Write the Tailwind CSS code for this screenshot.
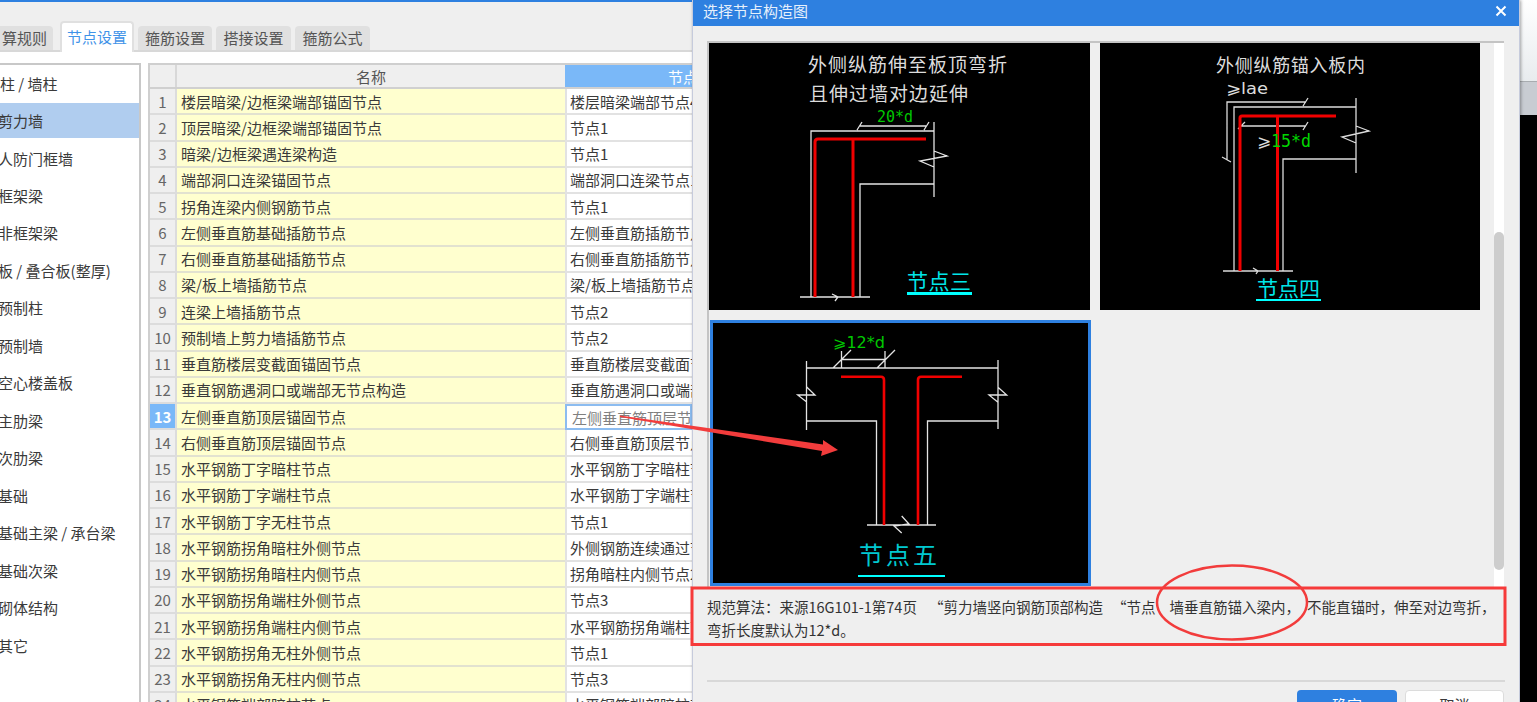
<!DOCTYPE html>
<html lang="zh">
<head>
<meta charset="utf-8">
<title>选择节点构造图</title>
<script src="https://cdn.jsdelivr.net/npm/@tailwindcss/browser@4"></script>
</head>
<body class="relative h-[702px] w-[1537px] overflow-hidden bg-white font-['Noto_Sans_CJK_SC','Noto_Sans',sans-serif] text-[15px] leading-none text-[#3a3a3a]">

<div class="h-[2px] bg-[#2e80e0]"></div>
<div class="flex h-[50px] items-end gap-[4px] border-b-2 border-[#d8d8d8] bg-[#efefef]">
  <div class="-ml-[4px] flex h-[24px] w-[57px] items-center justify-end rounded-t bg-[#e0e0e0] pr-[6px] pb-[2px] text-[#555]">算规则</div>
  <div class="-mb-[2px] ml-[3px] flex h-[31px] w-[74px] items-center justify-center rounded-t border-2 border-b-0 border-[#e0e0e0] bg-white pb-[2px] text-[#3f93e8]">节点设置</div>
  <div class="flex h-[24px] w-[74px] items-center justify-center rounded-t bg-[#e0e0e0] pb-[2px] text-[#555]">箍筋设置</div>
  <div class="flex h-[24px] w-[75px] items-center justify-center rounded-t bg-[#e0e0e0] pb-[2px] text-[#555]">搭接设置</div>
  <div class="flex h-[24px] w-[75px] items-center justify-center rounded-t bg-[#e0e0e0] pb-[2px] text-[#555]">箍筋公式</div>
</div>

<div class="mt-[11px] flex h-[639px] items-start">
  <!-- category list -->
  <div class="h-full w-[141px] overflow-hidden border-t-2 border-r-2 border-[#c8c8c8] pt-[0.6px]">
    <div class="mb-[2.47px] flex h-[35px] items-center">柱 / 墙柱</div>
    <div class="mb-[2.47px] flex h-[35px] items-center bg-[#b0cdef] -indent-[2px]">剪力墙</div>
    <div class="mb-[2.47px] flex h-[35px] items-center -indent-[2px]">人防门框墙</div>
    <div class="mb-[2.47px] flex h-[35px] items-center -indent-[2px]">框架梁</div>
    <div class="mb-[2.47px] flex h-[35px] items-center -indent-[2px]">非框架梁</div>
    <div class="mb-[2.47px] flex h-[35px] items-center -indent-[2px]">板 / 叠合板(整厚)</div>
    <div class="mb-[2.47px] flex h-[35px] items-center -indent-[2px]">预制柱</div>
    <div class="mb-[2.47px] flex h-[35px] items-center -indent-[2px]">预制墙</div>
    <div class="mb-[2.47px] flex h-[35px] items-center -indent-[2px]">空心楼盖板</div>
    <div class="mb-[2.47px] flex h-[35px] items-center -indent-[2px]">主肋梁</div>
    <div class="mb-[2.47px] flex h-[35px] items-center -indent-[2px]">次肋梁</div>
    <div class="mb-[2.47px] flex h-[35px] items-center -indent-[2px]">基础</div>
    <div class="mb-[2.47px] flex h-[35px] items-center -indent-[2px]">基础主梁 / 承台梁</div>
    <div class="mb-[2.47px] flex h-[35px] items-center -indent-[2px]">基础次梁</div>
    <div class="mb-[2.47px] flex h-[35px] items-center -indent-[2px]">砌体结构</div>
    <div class="mb-[2.47px] flex h-[35px] items-center -indent-[2px]">其它</div>
  </div>

  <!-- table -->
  <div class="ml-[7px] h-full w-[544px] overflow-hidden border-t-2 border-l-2 border-[#cfcfcf]">
    <div class="flex h-[24px] border-b-2 border-[#d0d0d0]">
      <div class="w-[27px] shrink-0 border-r-2 border-[#d8d8d8] bg-[#efefef]"></div>
      <div class="flex w-[388px] shrink-0 items-center justify-center bg-[#efefef] text-[#555]">名称</div>
      <div class="flex flex-1 items-center whitespace-nowrap bg-[#7ab8f8] pl-[103px] text-white">节点设置</div>
    </div>
    <div class="flex h-[26.25px]"><div class="flex w-[27px] shrink-0 items-center justify-center border-r-2 border-b-2 border-[#dcdcdc] bg-[#efefef] text-[#666]">1</div><div class="flex w-[388px] shrink-0 items-center border-b-2 border-[#e2e2d0] bg-[#ffffcf] pl-[4px]">楼层暗梁/边框梁端部锚固节点</div><div class="flex min-w-0 flex-1 items-center overflow-hidden whitespace-nowrap border-b-2 border-l-2 border-[#e2e2e2] pl-[3px]">楼层暗梁端部节点4</div></div>
    <div class="flex h-[26.25px]"><div class="flex w-[27px] shrink-0 items-center justify-center border-r-2 border-b-2 border-[#dcdcdc] bg-[#efefef] text-[#666]">2</div><div class="flex w-[388px] shrink-0 items-center border-b-2 border-[#e2e2d0] bg-[#ffffcf] pl-[4px]">顶层暗梁/边框梁端部锚固节点</div><div class="flex min-w-0 flex-1 items-center overflow-hidden whitespace-nowrap border-b-2 border-l-2 border-[#e2e2e2] pl-[3px]">节点1</div></div>
    <div class="flex h-[26.25px]"><div class="flex w-[27px] shrink-0 items-center justify-center border-r-2 border-b-2 border-[#dcdcdc] bg-[#efefef] text-[#666]">3</div><div class="flex w-[388px] shrink-0 items-center border-b-2 border-[#e2e2d0] bg-[#ffffcf] pl-[4px]">暗梁/边框梁遇连梁构造</div><div class="flex min-w-0 flex-1 items-center overflow-hidden whitespace-nowrap border-b-2 border-l-2 border-[#e2e2e2] pl-[3px]">节点1</div></div>
    <div class="flex h-[26.25px]"><div class="flex w-[27px] shrink-0 items-center justify-center border-r-2 border-b-2 border-[#dcdcdc] bg-[#efefef] text-[#666]">4</div><div class="flex w-[388px] shrink-0 items-center border-b-2 border-[#e2e2d0] bg-[#ffffcf] pl-[4px]">端部洞口连梁锚固节点</div><div class="flex min-w-0 flex-1 items-center overflow-hidden whitespace-nowrap border-b-2 border-l-2 border-[#e2e2e2] pl-[3px]">端部洞口连梁节点1</div></div>
    <div class="flex h-[26.25px]"><div class="flex w-[27px] shrink-0 items-center justify-center border-r-2 border-b-2 border-[#dcdcdc] bg-[#efefef] text-[#666]">5</div><div class="flex w-[388px] shrink-0 items-center border-b-2 border-[#e2e2d0] bg-[#ffffcf] pl-[4px]">拐角连梁内侧钢筋节点</div><div class="flex min-w-0 flex-1 items-center overflow-hidden whitespace-nowrap border-b-2 border-l-2 border-[#e2e2e2] pl-[3px]">节点1</div></div>
    <div class="flex h-[26.25px]"><div class="flex w-[27px] shrink-0 items-center justify-center border-r-2 border-b-2 border-[#dcdcdc] bg-[#efefef] text-[#666]">6</div><div class="flex w-[388px] shrink-0 items-center border-b-2 border-[#e2e2d0] bg-[#ffffcf] pl-[4px]">左侧垂直筋基础插筋节点</div><div class="flex min-w-0 flex-1 items-center overflow-hidden whitespace-nowrap border-b-2 border-l-2 border-[#e2e2e2] pl-[3px]">左侧垂直筋插筋节点</div></div>
    <div class="flex h-[26.25px]"><div class="flex w-[27px] shrink-0 items-center justify-center border-r-2 border-b-2 border-[#dcdcdc] bg-[#efefef] text-[#666]">7</div><div class="flex w-[388px] shrink-0 items-center border-b-2 border-[#e2e2d0] bg-[#ffffcf] pl-[4px]">右侧垂直筋基础插筋节点</div><div class="flex min-w-0 flex-1 items-center overflow-hidden whitespace-nowrap border-b-2 border-l-2 border-[#e2e2e2] pl-[3px]">右侧垂直筋插筋节点</div></div>
    <div class="flex h-[26.25px]"><div class="flex w-[27px] shrink-0 items-center justify-center border-r-2 border-b-2 border-[#dcdcdc] bg-[#efefef] text-[#666]">8</div><div class="flex w-[388px] shrink-0 items-center border-b-2 border-[#e2e2d0] bg-[#ffffcf] pl-[4px]">梁/板上墙插筋节点</div><div class="flex min-w-0 flex-1 items-center overflow-hidden whitespace-nowrap border-b-2 border-l-2 border-[#e2e2e2] pl-[3px]">梁/板上墙插筋节点</div></div>
    <div class="flex h-[26.25px]"><div class="flex w-[27px] shrink-0 items-center justify-center border-r-2 border-b-2 border-[#dcdcdc] bg-[#efefef] text-[#666]">9</div><div class="flex w-[388px] shrink-0 items-center border-b-2 border-[#e2e2d0] bg-[#ffffcf] pl-[4px]">连梁上墙插筋节点</div><div class="flex min-w-0 flex-1 items-center overflow-hidden whitespace-nowrap border-b-2 border-l-2 border-[#e2e2e2] pl-[3px]">节点2</div></div>
    <div class="flex h-[26.25px]"><div class="flex w-[27px] shrink-0 items-center justify-center border-r-2 border-b-2 border-[#dcdcdc] bg-[#efefef] text-[#666]">10</div><div class="flex w-[388px] shrink-0 items-center border-b-2 border-[#e2e2d0] bg-[#ffffcf] pl-[4px]">预制墙上剪力墙插筋节点</div><div class="flex min-w-0 flex-1 items-center overflow-hidden whitespace-nowrap border-b-2 border-l-2 border-[#e2e2e2] pl-[3px]">节点2</div></div>
    <div class="flex h-[26.25px]"><div class="flex w-[27px] shrink-0 items-center justify-center border-r-2 border-b-2 border-[#dcdcdc] bg-[#efefef] text-[#666]">11</div><div class="flex w-[388px] shrink-0 items-center border-b-2 border-[#e2e2d0] bg-[#ffffcf] pl-[4px]">垂直筋楼层变截面锚固节点</div><div class="flex min-w-0 flex-1 items-center overflow-hidden whitespace-nowrap border-b-2 border-l-2 border-[#e2e2e2] pl-[3px]">垂直筋楼层变截面节点</div></div>
    <div class="flex h-[26.25px]"><div class="flex w-[27px] shrink-0 items-center justify-center border-r-2 border-b-2 border-[#dcdcdc] bg-[#efefef] text-[#666]">12</div><div class="flex w-[388px] shrink-0 items-center border-b-2 border-[#e2e2d0] bg-[#ffffcf] pl-[4px]">垂直钢筋遇洞口或端部无节点构造</div><div class="flex min-w-0 flex-1 items-center overflow-hidden whitespace-nowrap border-b-2 border-l-2 border-[#e2e2e2] pl-[3px]">垂直筋遇洞口或端部</div></div>
    <div class="flex h-[26.25px]"><div class="flex w-[27px] shrink-0 items-center justify-center border-r-2 border-b-2 border-[#dcdcdc] bg-[#7ab8f8] font-bold text-white">13</div><div class="flex w-[388px] shrink-0 items-center border-b-2 border-[#e2e2d0] bg-[#ffffcf] pl-[4px]">左侧垂直筋顶层锚固节点</div><div class="flex min-w-0 flex-1 items-center overflow-hidden whitespace-nowrap border-2 border-[#8cbcf0] pl-[5px] text-[#808080]">左侧垂直筋顶层节点</div></div>
    <div class="flex h-[26.25px]"><div class="flex w-[27px] shrink-0 items-center justify-center border-r-2 border-b-2 border-[#dcdcdc] bg-[#efefef] text-[#666]">14</div><div class="flex w-[388px] shrink-0 items-center border-b-2 border-[#e2e2d0] bg-[#ffffcf] pl-[4px]">右侧垂直筋顶层锚固节点</div><div class="flex min-w-0 flex-1 items-center overflow-hidden whitespace-nowrap border-b-2 border-l-2 border-[#e2e2e2] pl-[3px]">右侧垂直筋顶层节点</div></div>
    <div class="flex h-[26.25px]"><div class="flex w-[27px] shrink-0 items-center justify-center border-r-2 border-b-2 border-[#dcdcdc] bg-[#efefef] text-[#666]">15</div><div class="flex w-[388px] shrink-0 items-center border-b-2 border-[#e2e2d0] bg-[#ffffcf] pl-[4px]">水平钢筋丁字暗柱节点</div><div class="flex min-w-0 flex-1 items-center overflow-hidden whitespace-nowrap border-b-2 border-l-2 border-[#e2e2e2] pl-[3px]">水平钢筋丁字暗柱节点</div></div>
    <div class="flex h-[26.25px]"><div class="flex w-[27px] shrink-0 items-center justify-center border-r-2 border-b-2 border-[#dcdcdc] bg-[#efefef] text-[#666]">16</div><div class="flex w-[388px] shrink-0 items-center border-b-2 border-[#e2e2d0] bg-[#ffffcf] pl-[4px]">水平钢筋丁字端柱节点</div><div class="flex min-w-0 flex-1 items-center overflow-hidden whitespace-nowrap border-b-2 border-l-2 border-[#e2e2e2] pl-[3px]">水平钢筋丁字端柱节点</div></div>
    <div class="flex h-[26.25px]"><div class="flex w-[27px] shrink-0 items-center justify-center border-r-2 border-b-2 border-[#dcdcdc] bg-[#efefef] text-[#666]">17</div><div class="flex w-[388px] shrink-0 items-center border-b-2 border-[#e2e2d0] bg-[#ffffcf] pl-[4px]">水平钢筋丁字无柱节点</div><div class="flex min-w-0 flex-1 items-center overflow-hidden whitespace-nowrap border-b-2 border-l-2 border-[#e2e2e2] pl-[3px]">节点1</div></div>
    <div class="flex h-[26.25px]"><div class="flex w-[27px] shrink-0 items-center justify-center border-r-2 border-b-2 border-[#dcdcdc] bg-[#efefef] text-[#666]">18</div><div class="flex w-[388px] shrink-0 items-center border-b-2 border-[#e2e2d0] bg-[#ffffcf] pl-[4px]">水平钢筋拐角暗柱外侧节点</div><div class="flex min-w-0 flex-1 items-center overflow-hidden whitespace-nowrap border-b-2 border-l-2 border-[#e2e2e2] pl-[3px]">外侧钢筋连续通过节点</div></div>
    <div class="flex h-[26.25px]"><div class="flex w-[27px] shrink-0 items-center justify-center border-r-2 border-b-2 border-[#dcdcdc] bg-[#efefef] text-[#666]">19</div><div class="flex w-[388px] shrink-0 items-center border-b-2 border-[#e2e2d0] bg-[#ffffcf] pl-[4px]">水平钢筋拐角暗柱内侧节点</div><div class="flex min-w-0 flex-1 items-center overflow-hidden whitespace-nowrap border-b-2 border-l-2 border-[#e2e2e2] pl-[3px]">拐角暗柱内侧节点2</div></div>
    <div class="flex h-[26.25px]"><div class="flex w-[27px] shrink-0 items-center justify-center border-r-2 border-b-2 border-[#dcdcdc] bg-[#efefef] text-[#666]">20</div><div class="flex w-[388px] shrink-0 items-center border-b-2 border-[#e2e2d0] bg-[#ffffcf] pl-[4px]">水平钢筋拐角端柱外侧节点</div><div class="flex min-w-0 flex-1 items-center overflow-hidden whitespace-nowrap border-b-2 border-l-2 border-[#e2e2e2] pl-[3px]">节点3</div></div>
    <div class="flex h-[26.25px]"><div class="flex w-[27px] shrink-0 items-center justify-center border-r-2 border-b-2 border-[#dcdcdc] bg-[#efefef] text-[#666]">21</div><div class="flex w-[388px] shrink-0 items-center border-b-2 border-[#e2e2d0] bg-[#ffffcf] pl-[4px]">水平钢筋拐角端柱内侧节点</div><div class="flex min-w-0 flex-1 items-center overflow-hidden whitespace-nowrap border-b-2 border-l-2 border-[#e2e2e2] pl-[3px]">水平钢筋拐角端柱节点</div></div>
    <div class="flex h-[26.25px]"><div class="flex w-[27px] shrink-0 items-center justify-center border-r-2 border-b-2 border-[#dcdcdc] bg-[#efefef] text-[#666]">22</div><div class="flex w-[388px] shrink-0 items-center border-b-2 border-[#e2e2d0] bg-[#ffffcf] pl-[4px]">水平钢筋拐角无柱外侧节点</div><div class="flex min-w-0 flex-1 items-center overflow-hidden whitespace-nowrap border-b-2 border-l-2 border-[#e2e2e2] pl-[3px]">节点1</div></div>
    <div class="flex h-[26.25px]"><div class="flex w-[27px] shrink-0 items-center justify-center border-r-2 border-b-2 border-[#dcdcdc] bg-[#efefef] text-[#666]">23</div><div class="flex w-[388px] shrink-0 items-center border-b-2 border-[#e2e2d0] bg-[#ffffcf] pl-[4px]">水平钢筋拐角无柱内侧节点</div><div class="flex min-w-0 flex-1 items-center overflow-hidden whitespace-nowrap border-b-2 border-l-2 border-[#e2e2e2] pl-[3px]">节点3</div></div>
    <div class="flex h-[26.25px]"><div class="flex w-[27px] shrink-0 items-center justify-center border-r-2 border-b-2 border-[#dcdcdc] bg-[#efefef] text-[#666]">24</div><div class="flex w-[388px] shrink-0 items-center border-b-2 border-[#e2e2d0] bg-[#ffffcf] pl-[4px]">水平钢筋端部暗柱节点</div><div class="flex min-w-0 flex-1 items-center overflow-hidden whitespace-nowrap border-b-2 border-l-2 border-[#e2e2e2] pl-[3px]">水平钢筋端部暗柱节点</div></div>
  </div>
</div>

<!-- window behind, right edge -->
<div class="absolute top-0 left-[1520px] flex h-[702px] w-[17px] flex-col">
  <div class="h-[81px] bg-gradient-to-b from-white to-[#e8ecee]"></div>
  <div class="h-[34px] border-t border-[#a8acb0] bg-[#c8ccd2]"></div>
  <div class="flex-1 bg-black"></div>
</div>

<!-- dialog -->
<div class="absolute top-0 left-[692px] h-[702px] w-[828px] overflow-hidden border-l border-r border-[#c6cbdc] bg-[#efefef] shadow-[1px_0_3px_rgba(0,0,0,0.35)]">
  <div class="flex h-[26px] items-center justify-between bg-[#2e80e0] pr-[12px] pl-[10px] text-[#e6f0fb]">
    <span class="-mt-[5px]">选择节点构造图</span>
    <svg width="12" height="12" viewBox="0 0 12 12" class="-mt-[4px]"><path d="M1.5 1.5 10.5 10.5M10.5 1.5 1.5 10.5" stroke="#fff" stroke-width="2" fill="none"/></svg>
  </div>

  <div class="mt-[15px] ml-[14px] flex h-[546px] w-[797px] border-t-2 border-l-2 border-[#c4c4c4]">
    <div class="flex w-[778px] flex-wrap content-start gap-x-[10px] gap-y-[10px]">
      <svg class="block h-[267px] w-[381px] bg-black" viewBox="709 43 381 267" font-family="'Noto Sans CJK SC',sans-serif">
        <text x="808" y="72" font-size="19" fill="#dcdcdc" textLength="199">外侧纵筋伸至板顶弯折</text>
        <text x="809" y="101" font-size="19" fill="#dcdcdc" textLength="159">且伸过墙对边延伸</text>
        <text x="877" y="122" font-size="15" fill="#00c800" font-family="'DejaVu Sans Mono',monospace" textLength="36" lengthAdjust="spacingAndGlyphs">20*d</text>
        <path d="M811 297V131H934M934 122V197M934 184H860V297M800 297H870M934 151 947 156 920 161 934 167M860 126H926M857 130 862 122M924 130 929 122M832 294 838 297 835 301" stroke="#e4e4e4" stroke-width="1.3" fill="none"/>
        <path d="M815 297V142Q815 139 818 139H926M853 139V297" stroke="#f00000" stroke-width="3" fill="none"/>
        <text x="907" y="289" font-size="21" fill="#00e5e8" textLength="64">节点三</text>
        <rect x="907" y="292" width="65" height="3" fill="#00ffff"/>
      </svg>
      <svg class="block h-[267px] w-[380px] bg-black" viewBox="1100 43 380 267" font-family="'Noto Sans CJK SC',sans-serif">
        <text x="1216" y="72" font-size="18" fill="#dcdcdc" textLength="149">外侧纵筋锚入板内</text>
        <text x="1226" y="94" font-size="16" fill="#dcdcdc" font-family="'DejaVu Sans',monospace" textLength="42" lengthAdjust="spacingAndGlyphs">⩾lae</text>
        <path d="M1234 271V107H1356M1356 98V173M1356 159H1283V271M1223 271H1293M1356 126 1369 131 1342 137 1356 143M1306 102H1227V160M1222 157 1231 162M1303 106 1308 98M1240 126H1306M1238 129 1245 122M1303 130 1308 122M1253 268 1258 271 1256 274" stroke="#dcdcdc" stroke-width="1.3" fill="none"/>
        <path d="M1240 271V118Q1240 116 1242 116H1336M1277.5 116V271" stroke="#f00000" stroke-width="3" fill="none"/>
        <text x="1257" y="147" font-size="17" fill="#dcdcdc" font-family="'DejaVu Sans',monospace">⩾</text>
        <text x="1271" y="147" font-size="17" fill="#00d800" font-family="'DejaVu Sans Mono',monospace" textLength="40" lengthAdjust="spacingAndGlyphs">15*d</text>
        <text x="1257" y="296" font-size="21" fill="#00e5e8" textLength="63">节点四</text>
        <rect x="1256" y="299" width="65" height="2" fill="#00ffff"/>
      </svg>
      <div class="ml-px box-border h-[266px] w-[381px] border-[3px] border-[#2e80e0]">
        <svg class="block h-[260px] w-[375px] bg-black" viewBox="713 323 375 260" font-family="'Noto Sans CJK SC',sans-serif">
          <text x="833" y="348" font-size="15" fill="#00c800" font-family="'DejaVu Sans',monospace" textLength="52" lengthAdjust="spacingAndGlyphs">⩾12*d</text>
          <path d="M806 368H998M806.5 361V430M998 360V429M806 421H876.5V525M998 421H927.5V525M867 525H936M841.5 359.5H885M841.5 351V368M885 351V368M833 368 851 350M877 368 895 350M806.7 387 815 395 797.7 395 806.7 402M997.7 387 1006.7 395 989 395 997.7 402M901.7 516 909 524 894 526 901.7 533" stroke="#e4e4e4" stroke-width="1.3" fill="none"/>
          <path d="M841 376.7H881Q884 376.7 884 380V525M962 376.7H921Q918 376.7 918 380V525" stroke="#f00000" stroke-width="2.6" fill="none"/>
          <text x="859" y="564" font-size="24" fill="#00c8d0" textLength="78">节点五</text>
          <rect x="858" y="575" width="87" height="2" fill="#00ffff"/>
        </svg>
      </div>
    </div>
    <div class="ml-[8px] flex-1 bg-white pt-[189px]">
      <div class="mx-auto h-[338px] w-[10px] rounded-full bg-[#cdcdcd]"></div>
    </div>
  </div>

  <div class="h-[58px] whitespace-nowrap pt-[8px] pl-[14px] text-[14.5px] leading-[23px] text-[#333]">规范算法：来源16G101-1第74页<span class="ml-[12px]">“剪力墙竖向钢筋顶部构造</span><span class="ml-[9px]">“节点</span><span class="ml-[14px]">墙垂直筋锚入梁内，</span><span class="ml-[7px]">不能直锚时，伸至对边弯折，</span><br>弯折长度默认为12*d。</div>

  <div class="mt-[35px] ml-[14px] h-[2px] w-[798px] bg-[#d8d8d8]"></div>
  <div class="mt-[8px] flex justify-end gap-[8px] pr-[15px]">
    <div class="flex h-[28px] w-[100px] items-center justify-center rounded bg-[#2e80e0] text-white">确定</div>
    <div class="flex h-[28px] w-[99px] items-center justify-center rounded border border-[#dcdcdc] bg-white">取消</div>
  </div>
</div>

<!-- hand-drawn annotations laid over the screenshot -->
<svg class="pointer-events-none absolute top-0 left-0" width="1537" height="702" viewBox="0 0 1537 702">
  <polygon points="620,415.5 823,444.5 823,440 838,450 821,456 822,451 620,417" fill="#f23c3c"/>
  <rect x="692" y="588" width="813" height="56.5" fill="none" stroke="#f63a3a" stroke-width="3"/>
  <ellipse cx="1232" cy="602.5" rx="75" ry="37" fill="none" stroke="#f23c3c" stroke-width="2.5"/>
</svg>
</body>
</html>
